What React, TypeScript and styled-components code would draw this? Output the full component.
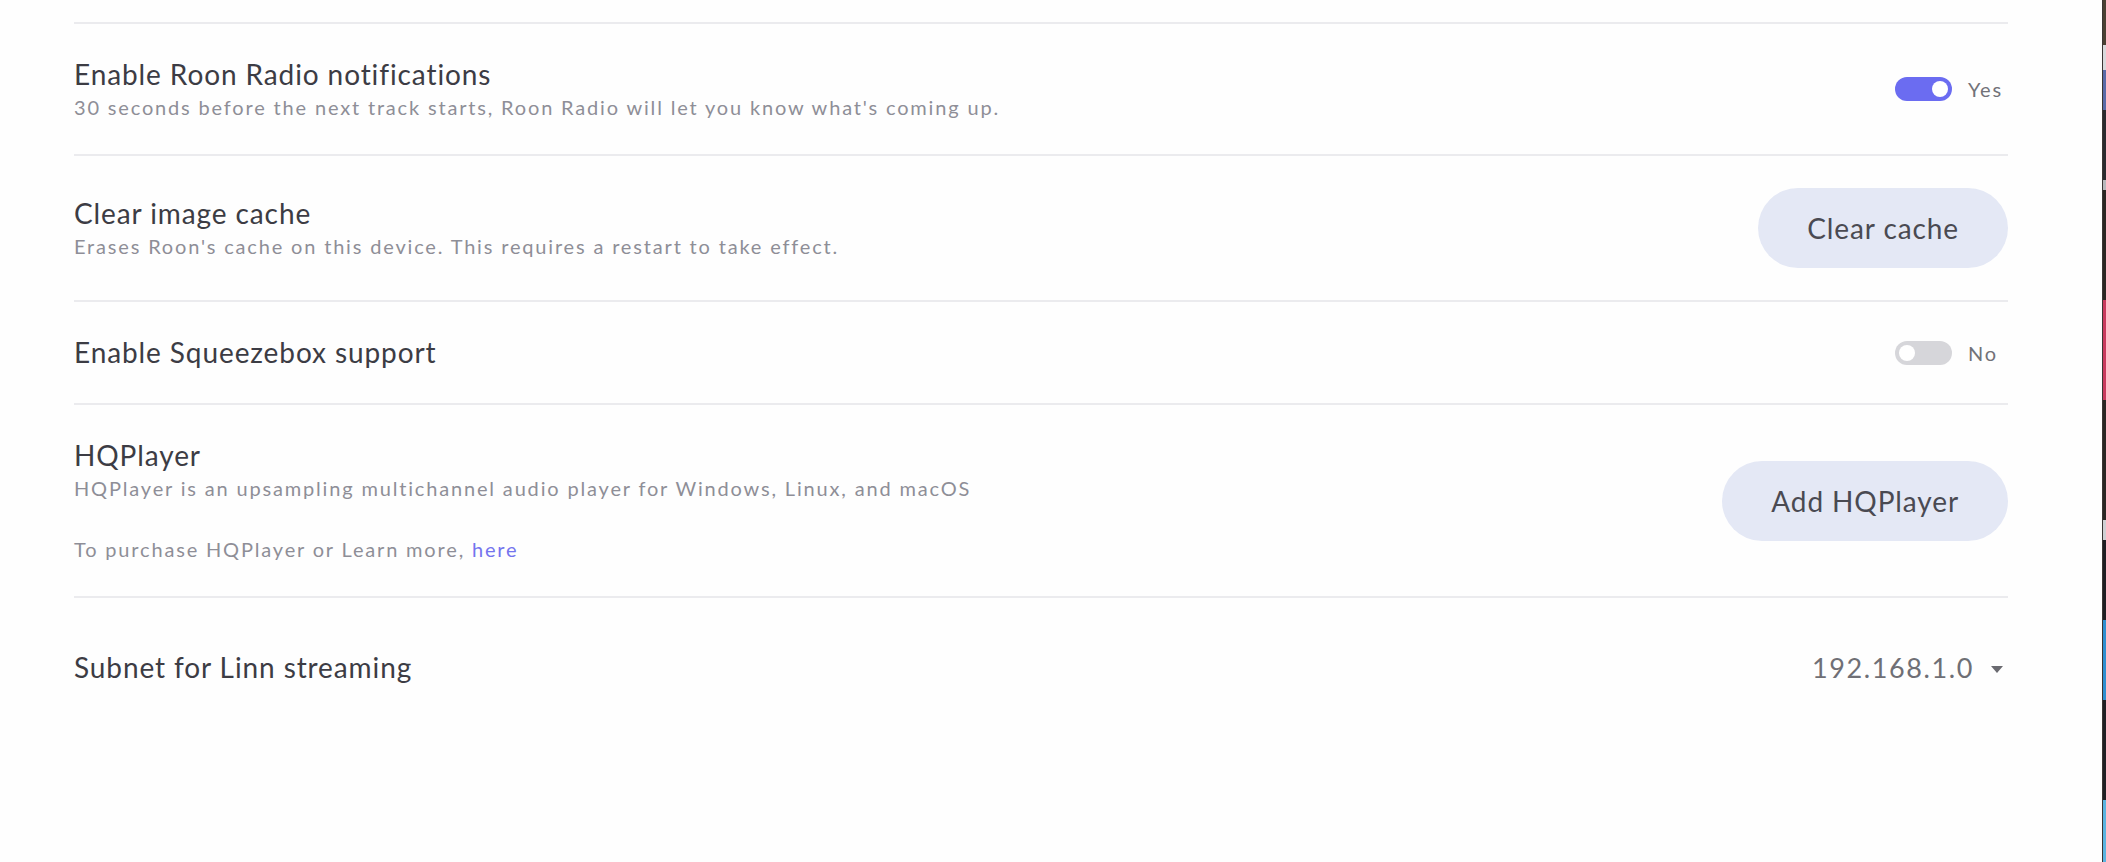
import React from 'react';
import styled, { createGlobalStyle } from 'styled-components';

const GlobalStyle = createGlobalStyle`
  html, body {
    margin: 0;
    padding: 0;
    background: #fff;
  }
  body {
    font-family: Lato, "Open Sans", "Liberation Sans", sans-serif;
    -webkit-font-smoothing: antialiased;
  }
`;

const Page = styled.div`
  display: flex;
  width: 100%;
  height: 862px;
  overflow: hidden;
  background: #fefefe;
`;

const Settings = styled.div`
  flex: 1;
  padding: 22px 94px 0 74px;
`;

// strip of the neighbouring window visible at the right edge
const WindowEdge = styled.div`
  width: 3px;
  border-left: 1px solid #3a3532;
  background: linear-gradient(
    to bottom,
    #4a4033 0 45px,
    #d9d9dc 45px 70px,
    #5a6aa8 70px 110px,
    #2a2a2e 110px 180px,
    #b8b8bc 180px 190px,
    #2b2622 190px 300px,
    #c93a5e 300px 400px,
    #2a2623 400px 520px,
    #d0d0d4 520px 540px,
    #1e1e22 540px 620px,
    #2e8fd0 620px 700px,
    #202024 700px 800px,
    #5ab4e0 800px 862px
  );
`;

const Row = styled.div<{ $extraTop?: number }>`
  display: flex;
  align-items: center;
  justify-content: space-between;
  gap: 40px;
  padding: ${(p) => 32 + (p.$extraTop ?? 0)}px 0 32px;
  border-top: 2px solid #ebebee;
`;

const Text = styled.div`
  display: flex;
  flex-direction: column;
`;

const Title = styled.div`
  font-size: 28px;
  line-height: 37px;
  letter-spacing: 0.9px;
  color: #3c3c44;
`;

const Note = styled.div<{ $gap?: number }>`
  font-size: 20px;
  line-height: 29px;
  letter-spacing: 1.83px;
  color: #8e8e97;
  margin-top: ${(p) => p.$gap ?? 0}px;
`;

const Link = styled.a`
  color: #7474ee;
  text-decoration: none;
`;

const ToggleGroup = styled.div`
  display: flex;
  align-items: center;
  gap: 16px;
`;

const Track = styled.div<{ $on: boolean }>`
  position: relative;
  width: 57px;
  height: 24px;
  border-radius: 12px;
  background: ${(p) => (p.$on ? '#6b6cf1' : '#d6d6da')};
`;

const Knob = styled.div<{ $on: boolean }>`
  position: absolute;
  top: 4px;
  left: ${(p) => (p.$on ? '37px' : '4px')};
  width: 16px;
  height: 16px;
  border-radius: 50%;
  background: #fff;
`;

const ToggleLabel = styled.span`
  width: 40px;
  font-size: 20px;
  letter-spacing: 1.8px;
  color: #727278;
`;

const PillButton = styled.button`
  height: 80px;
  padding: 0 49px;
  border: none;
  border-radius: 40px;
  background: #e4e8f5;
  color: #4a4a52;
  font-family: inherit;
  font-size: 28px;
  letter-spacing: 0.9px;
  cursor: pointer;
`;

const Select = styled.div`
  display: flex;
  align-items: center;
  gap: 17px;
  padding-right: 5px;
  font-size: 27px;
  letter-spacing: 1.6px;
  color: #6f6f75;
`;

const Caret = styled.span`
  width: 0;
  height: 0;
  border-left: 6px solid transparent;
  border-right: 6px solid transparent;
  border-top: 7px solid #6a6a70;
  margin-top: 3px;
`;

const Toggle = ({ on }: { on: boolean }) => (
  <ToggleGroup>
    <Track $on={on}>
      <Knob $on={on} />
    </Track>
    <ToggleLabel>{on ? 'Yes' : 'No'}</ToggleLabel>
  </ToggleGroup>
);

export default function App() {
  return (
    <>
      <GlobalStyle />
      <Page>
        <Settings>
          <Row>
            <Text>
              <Title>Enable Roon Radio notifications</Title>
              <Note>30 seconds before the next track starts, Roon Radio will let you know what's coming up.</Note>
            </Text>
            <Toggle on />
          </Row>
          <Row>
            <Text>
              <Title>Clear image cache</Title>
              <Note>Erases Roon's cache on this device. This requires a restart to take effect.</Note>
            </Text>
            <PillButton>Clear cache</PillButton>
          </Row>
          <Row>
            <Text>
              <Title>Enable Squeezebox support</Title>
            </Text>
            <Toggle on={false} />
          </Row>
          <Row>
            <Text>
              <Title>HQPlayer</Title>
              <Note>HQPlayer is an upsampling multichannel audio player for Windows, Linux, and macOS</Note>
              <Note $gap={32}>
                To purchase HQPlayer or Learn more, <Link href="#">here</Link>
              </Note>
            </Text>
            <PillButton>Add HQPlayer</PillButton>
          </Row>
          <Row $extraTop={19}>
            <Text>
              <Title>Subnet for Linn streaming</Title>
            </Text>
            <Select>
              192.168.1.0
              <Caret />
            </Select>
          </Row>
        </Settings>
        <WindowEdge />
      </Page>
    </>
  );
}
